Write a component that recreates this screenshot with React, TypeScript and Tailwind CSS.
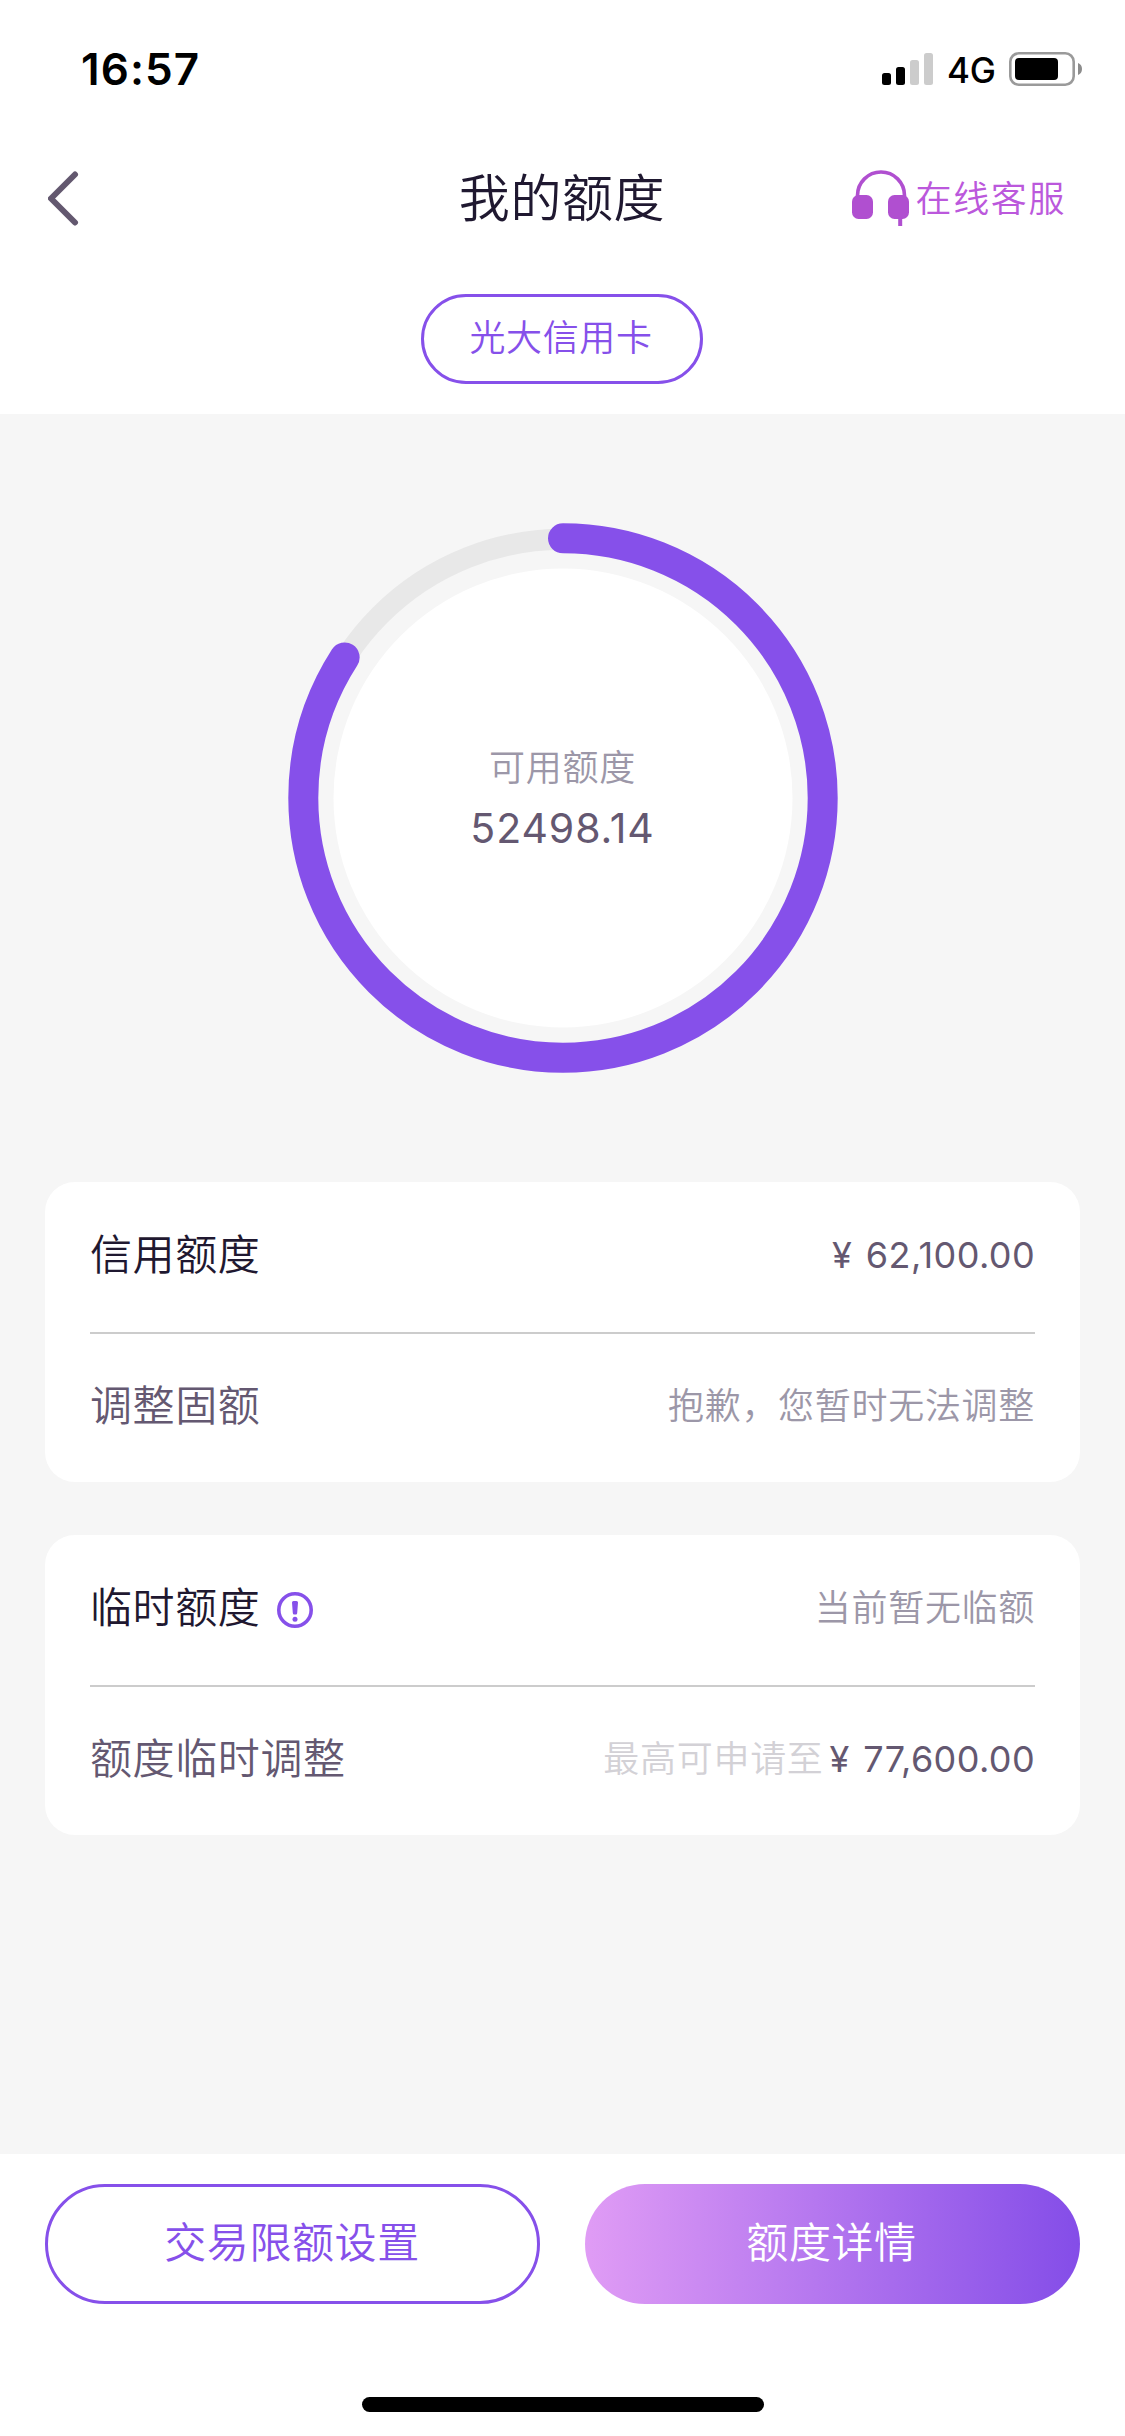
import type { ReactNode } from "react";

function StatusBar() {
  return (
    <div className="flex h-[138px] items-center justify-between pl-[81px] pr-[43px]">
      <span className="w-[120px] whitespace-nowrap text-[44px] leading-[44px] font-semibold text-black tracking-[1.1px]">
        16:57
      </span>
      <div className="flex items-center">
        <div className="flex h-[32px] items-end gap-[5px]">
          <i className="h-[12px] w-[9px] rounded-[2.5px] bg-black" />
          <i className="h-[18px] w-[9px] rounded-[2.5px] bg-black" />
          <i className="h-[25px] w-[9px] rounded-[2.5px] bg-[#cccccc]" />
          <i className="h-[32px] w-[9px] rounded-[2.5px] bg-[#cccccc]" />
        </div>
        <span className="ml-[14px] mt-[2px] w-[48px] whitespace-nowrap text-[35px] leading-[35px] font-medium tracking-[-0.3px] text-black">
          4G
        </span>
        <svg className="ml-[14px]" width="73" height="34" viewBox="0 0 73 34" fill="none">
          <rect x="1.3" y="1.3" width="63.4" height="31.4" rx="8.5" stroke="#9a9a9a" strokeWidth="2.6" />
          <rect x="6" y="6" width="43" height="22" rx="4" fill="#000" />
          <path d="M69 11c2.6 1 4 3.300 4 6s-1.400 5-4 6z" fill="#8c8c8c" />
        </svg>
      </div>
    </div>
  );
}

function NavBar() {
  return (
    <div className="grid h-[120px] grid-cols-[1fr_auto_1fr] items-center pl-[48px] pr-[59px]">
      <svg width="31" height="55" viewBox="0 0 31 55" fill="none">
        <path d="M27 3.500 3 27.500 27 51.500" stroke="#63586f" strokeWidth="6" strokeLinecap="round" strokeLinejoin="round" />
      </svg>
      <h1 className="ml-[10px] mt-[2px] text-[51px] leading-[60px] font-[350] tracking-[0.6px] text-[#1f1830]">我的额度</h1>
      <div className="flex items-center justify-end">
        <svg className="mr-[7px]" width="57" height="56" viewBox="0 0 57 56" fill="none">
          <path d="M5.500 28V25.500a23.500 23.500 0 0 1 47 0V28" stroke="#b04fd0" strokeWidth="3.600" />
          <rect x="0" y="25" width="21" height="24" rx="6.500" fill="#b04fd0" />
          <rect x="36" y="25" width="21" height="24" rx="6.500" fill="#b04fd0" />
          <path d="M48.200 48v8" stroke="#b04fd0" strokeWidth="4" />
        </svg>
        <span className="mt-[2px] whitespace-nowrap text-[36px] leading-[42px] font-[350] tracking-[1.6px] text-[#bb58dc]">在线客服</span>
      </div>
    </div>
  );
}

function QuotaRing({ fraction }: { fraction: number }) {
  const length = 2 * Math.PI * 259.7;
  return (
    <div className="relative mt-[109px] h-[550px] w-[550px] self-center">
      <svg width="550" height="550" viewBox="0 0 550 550" fill="none">
        <circle cx="275" cy="275" r="229.500" fill="#fff" />
        <circle cx="275" cy="275" r="258.700" stroke="#e8e8e8" strokeWidth="21" />
        <circle
          cx="275"
          cy="275"
          r="259.700"
          stroke="#8650ea"
          strokeWidth="30"
          strokeLinecap="round"
          strokeDasharray={`${length * fraction} ${length}`}
          transform="rotate(-90 275 275)"
        />
      </svg>
      <div className="absolute inset-0 flex flex-col items-center justify-center pt-[4px]">
        <span className="text-[36px] leading-[48px] font-[350] tracking-[0.700px] text-[#9c97a8]">可用额度</span>
        <span className="mt-[8px] text-[41px] leading-[56px] tracking-[0.900px] text-[#645871]">52498.14</span>
      </div>
    </div>
  );
}

function Card({ top, bottom }: { top: ReactNode; bottom: ReactNode }) {
  return (
    <section className="flex h-[300px] flex-col rounded-[30px] bg-white px-[45px]">
      <div className="flex h-[152px] items-center justify-between border-b-2 border-[#cccccc] pb-[4px]">{top}</div>
      <div className="flex h-[148px] items-center justify-between pb-[5px]">{bottom}</div>
    </section>
  );
}

function Note({ children }: { children: ReactNode }) {
  return <span className="text-[36px] leading-[42px] font-[350] tracking-[0.700px] text-[#9c97a8]">{children}</span>;
}

function Amount({ children }: { children: ReactNode }) {
  return (
    <span className="whitespace-pre text-[36px] leading-[42px] tracking-[0.400px] [word-spacing:3px] text-[#645871]">
      {children}
    </span>
  );
}

function InfoIcon() {
  return (
    <svg className="ml-[17px] mt-[3px]" width="36" height="36" viewBox="0 0 36 36" fill="none">
      <circle cx="18" cy="18" r="16.200" stroke="#8650ea" strokeWidth="3.600" />
      <path d="M15 10.500a1.500 1.500 0 0 1 1.500-1.500h3a1.500 1.500 0 0 1 1.500 1.500l-.8 10.500a1.500 1.500 0 0 1-1.500 1.500h-1.400a1.500 1.500 0 0 1-1.500-1.500z" fill="#8650ea" />
      <circle cx="18" cy="27.200" r="2.500" fill="#8650ea" />
    </svg>
  );
}

export default function App() {
  return (
    <div
      lang="zh-CN"
      className="flex h-[2436px] w-[1125px] flex-col bg-white font-['Inter','Noto_Sans_CJK_SC',sans-serif]"
    >
      <header className="flex h-[414px] flex-col">
        <StatusBar />
        <NavBar />
        <button className="mt-[36px] mr-px h-[90px] w-[282px] self-center rounded-full border-[3px] border-[#8650ea] pb-[2px] pr-[2px] text-[36px] leading-[42px] font-[350] tracking-[0.600px] text-[#8650ea]">
          光大信用卡
        </button>
      </header>

      <main className="flex h-[1740px] flex-col bg-[#f6f6f6] px-[45px]">
        <QuotaRing fraction={0.8407} />
        <div className="mt-[109px] flex flex-col gap-[53px]">
          <Card
            top={
              <>
                <span className="text-[42px] leading-[50px] font-[350] tracking-[0.600px] text-[#1f1830]">信用额度</span>
                <Amount>¥ 62,100.00</Amount>
              </>
            }
            bottom={
              <>
                <span className="text-[42px] leading-[50px] font-[350] tracking-[0.600px] text-[#645871]">调整固额</span>
                <Note>抱歉，您暂时无法调整</Note>
              </>
            }
          />
          <Card
            top={
              <>
                <div className="flex items-center">
                  <span className="text-[42px] leading-[50px] font-[350] tracking-[0.600px] text-[#1f1830]">临时额度</span>
                  <InfoIcon />
                </div>
                <Note>当前暂无临额</Note>
              </>
            }
            bottom={
              <>
                <span className="text-[42px] leading-[50px] font-[350] tracking-[0.600px] text-[#645871]">额度临时调整</span>
                <div className="flex items-center gap-[6px]">
                  <span className="text-[36px] leading-[42px] font-[350] tracking-[0.700px] text-[#d3d1d6]">最高可申请至</span>
                  <Amount>¥ 77,600.00</Amount>
                </div>
              </>
            }
          />
        </div>
      </main>

      <footer className="flex grow flex-col items-center px-[45px] pt-[30px]">
        <div className="grid w-full grid-cols-2 gap-[45px] text-[42px] leading-[50px] font-[350] tracking-[0.600px]">
          <button className="h-[120px] rounded-full border-[3px] border-[#8650ea] pb-[3px] pr-[1px] text-[#8650ea]">
            交易限额设置
          </button>
          <button className="h-[120px] rounded-full bg-linear-to-r/srgb from-[#e09cf5] to-[#844de8] pb-[3px] pr-[2px] text-white">
            额度详情
          </button>
        </div>
        <div className="mt-[93px] h-[15px] w-[402px] rounded-full bg-black" />
      </footer>
    </div>
  );
}
